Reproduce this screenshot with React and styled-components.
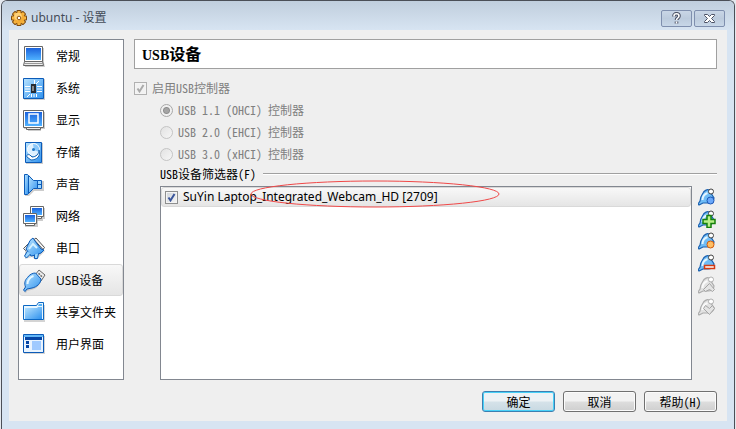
import React from 'react';
import styled, { createGlobalStyle, css } from 'styled-components';

const ui = '"Noto Sans", "Noto Sans CJK SC", sans-serif';
const song = '"Noto Sans CJK SC", sans-serif';

const GlobalStyle = createGlobalStyle`
  * { box-sizing: border-box; }
  body { margin: 0; background: #e4e8ee; font: 12px/16px ${ui}; color: #000; }
  button, input { font: inherit; margin: 0; }
`;

const Window = styled.main`
  display: flex;
  flex-direction: column;
  min-height: 100vh;
  margin: 0 1px;
  padding: 0 7px 8px;
  border: 1px solid #4b4f57;
  border-bottom: 0;
  border-radius: 6px 6px 0 0;
  background: #d7e4f2;
`;

const TitleBar = styled.header`
  display: flex;
  align-items: center;
  gap: 3px;
  height: 29px;
  margin: 0 -7px;
  padding: 5px 9px 0 8px;
  border-radius: 5px 5px 0 0;
  background: linear-gradient(#c0cedd, #d7e4f2);
  color: #444c58;
`;

const Caption = styled.h1`
  flex: 1;
  margin: 0;
  font: 400 12px/18px ${ui};
`;

const CaptionButtons = styled.div`
  display: flex;
  gap: 2px;
`;

const CaptionButton = styled.button`
  display: grid;
  place-items: center;
  width: 31px;
  height: 17px;
  padding: 0;
  border: 1px solid #7f8fae;
  border-radius: 2px;
  background: linear-gradient(#c9d6e6, #bccbdd 50%, #c8d7e8);
`;

const Client = styled.div`
  flex: 1;
  display: flex;
  flex-direction: column;
  gap: 11px;
  padding: 9px 10px 9px 9px;
  background: #efefef;
`;

const Columns = styled.div`
  flex: 1;
  display: flex;
  gap: 10px;
`;

const Sidebar = styled.nav`
  width: 106px;
  border: 1px solid #828790;
  background: #fff;
`;

const NavItem = styled.button`
  display: flex;
  align-items: center;
  gap: 10px;
  width: 100%;
  height: 32px;
  padding: 2px 2px 0;
  border: 1px solid transparent;
  border-radius: 3px;
  background: none;
  text-align: left;
  white-space: nowrap;
  ${p => p.$selected && css`
    border-color: #d9d9d9;
    background: linear-gradient(#f8f8f8, #e5e5e5);
  `}
`;

const Page = styled.section`
  flex: 1;
  display: flex;
  flex-direction: column;
  min-width: 0;
  font-family: ${song};
`;

const PageTitle = styled.h2`
  height: 30px;
  margin: 0 0 8px;
  padding: 3px 7px;
  border: 1px solid #a0a0a0;
  background: #fff;
  font: 700 16px/20px ${song};
`;

const TitleLatin = styled.span`
  font: 700 14px/20px "Liberation Serif", serif;
`;

const Half = styled.span`
  font-feature-settings: "hwid";
  white-space: pre;
`;

const Option = styled.label`
  display: flex;
  align-items: center;
  gap: 5px;
  height: 22px;
  color: #808080;
`;

const Controllers = styled.div`
  padding-left: 26px;
`;

const CheckBox = styled.input`
  appearance: none;
  flex: none;
  width: 13px;
  height: 13px;
  border: 1px solid #8e8f8f;
  box-shadow: inset 0 0 0 1px #f4f4f4;
  background: url("data:image/svg+xml,%3Csvg xmlns='http://www.w3.org/2000/svg' viewBox='0 0 11 11'%3E%3Cpath d='M2.5 5.5l2 3L8.5 2' fill='none' stroke='%233a559b' stroke-width='2'/%3E%3C/svg%3E") center / 11px 11px, linear-gradient(135deg, #cfd4da, #f6f6f6);
  &:disabled {
    border-color: #b1b1b1;
    background: url("data:image/svg+xml,%3Csvg xmlns='http://www.w3.org/2000/svg' viewBox='0 0 11 11'%3E%3Cpath d='M2.5 5.5l2 3L8.5 2' fill='none' stroke='%23aaaaaa' stroke-width='2'/%3E%3C/svg%3E") center / 11px 11px, #f2f2f2;
  }
`;

const Radio = styled.input`
  appearance: none;
  flex: none;
  width: 13px;
  height: 13px;
  border: 1px solid #c4c4c4;
  border-radius: 50%;
  background: linear-gradient(135deg, #e2e2e2, #f6f6f6);
  &:checked {
    border-color: #a8a8a8;
    background: radial-gradient(circle, #a4a4a4 0 2px, #8e8e8e 3px, #f0f0f0 4px);
  }
`;

const GroupTitle = styled.h3`
  display: flex;
  align-items: center;
  gap: 7px;
  height: 16px;
  margin: 1px 0 4px 26px;
  font: 400 12px/16px ${song};
  &::after { content: ""; flex: 1; border-top: 1px solid #a0a0a0; border-bottom: 1px solid #fff; }
`;

const Filters = styled.div`
  position: relative;
  flex: 1;
  display: flex;
  gap: 6px;
  margin-left: 26px;
`;

const FilterList = styled.div`
  flex: 1;
  border: 1px solid #828790;
  background: #fff;
  font-family: ${ui};
`;

const FilterRow = styled.label`
  display: flex;
  align-items: center;
  gap: 5px;
  height: 20px;
  padding: 0 3px;
  border: 1px solid #d9d9d9;
  border-radius: 3px;
  background: linear-gradient(#f8f8f8, #e5e5e5);
  white-space: nowrap;
`;

const Marker = styled.svg`
  position: absolute;
  left: 90px;
  top: -6px;
  pointer-events: none;
`;

const Tools = styled.div`
  display: flex;
  flex-direction: column;
  width: 19px;
`;

const ToolButton = styled.button`
  display: grid;
  justify-content: start;
  align-content: center;
  height: 22px;
  padding: 0;
  border: 0;
  background: none;
`;

const Actions = styled.footer`
  display: flex;
  justify-content: flex-end;
  gap: 8px;
`;

const ActionButton = styled.button`
  width: 73px;
  height: 21px;
  padding: 0;
  border: 1px solid ${p => (p.$primary ? '#3c7fb1' : '#707070')};
  border-radius: 3px;
  box-shadow: inset 0 0 0 1px ${p => (p.$primary ? '#48d1f8' : '#fbfbfb')};
  background: ${p => (p.$primary
    ? 'linear-gradient(#edf2f5 0 48%, #d5e2e9 52%, #c8d9e2)'
    : 'linear-gradient(#f2f2f2 0 48%, #dddddd 52%, #cfcfcf)')};
  font: 12px/17px ${song};
`;

function Icon({ children, name }) {
  return (
    <svg width="24" height="24" viewBox="0 0 24 24" aria-hidden="true">
      <defs>
        <linearGradient id={`${name}-b`} x1="0" y1="0" x2="0" y2="1">
          <stop offset="0" stopColor="#1b62dc" /><stop offset="1" stopColor="#50b2ff" />
        </linearGradient>
        <linearGradient id={`${name}-l`} x1="0" y1="0" x2="1" y2="1">
          <stop offset="0" stopColor="#b9e4ff" /><stop offset="1" stopColor="#2e91ee" />
        </linearGradient>
      </defs>
      {children}
    </svg>
  );
}

const icons = {
  general: n => (<>
    <path d="M4 3h18v15l1 4H3z" fill="#aaa" opacity=".6" />
    <path d="M2.5 1.5h18v15h-18z" fill="#fff" stroke="#666" />
    <path d="M4 3h15v12H4z" fill={`url(#${n}-b)`} />
    <path d="M2.5 16.5h18l1 4h-20z" fill="#eee" stroke="#666" />
    <path d="M2 18.5h19" stroke="#999" />
  </>),
  system: n => (<>
    <path d="M2 2h21v21H2z" fill="#aaa" opacity=".6" />
    <path d="M1.5 1.5h20v20h-20z" fill={`url(#${n}-l)`} stroke="#0c5bb8" />
    <path d="M3 9.5h5M3 12h5M3 14.5h5M15 9.5h5M15 12h5M15 14.5h5M9.5 17v3M12 17v3M14.5 17v3M12.5 3v4M14 7l3-3M5 20l3-3" stroke="#fff" fill="none" />
    <path d="M9 7h5v9H9z" fill="#282c32" /><path d="M10 9h2v5h-2z" fill="#888" />
  </>),
  display: n => (<>
    <path d="M2 3h21v17h-4v2H6v-2H2z" fill="#aaa" opacity=".6" />
    <path d="M1.5 1.5h20v17h-20z" fill="#fff" stroke="#666" />
    <path d="M3 3h17v14H3z" fill={`url(#${n}-b)`} />
    <path d="M7 5h9v9H7z" fill="none" stroke="#fff" strokeWidth="1.5" />
    <path d="M4.5 18.5h14v2h-14z" fill="#eee" stroke="#666" />
  </>),
  storage: n => (<>
    <path d="M4 2h17v21H4z" fill="#aaa" opacity=".6" />
    <path d="M3.5 1.5h16v20h-16z" fill={`url(#${n}-l)`} stroke="#0c5bb8" />
    <circle cx="11.5" cy="8.5" r="6" fill="#dff1ff" stroke="#fff" />
    <path d="M11 3a6 6 0 0 1 6 8l-5-2z" fill="#8ac8fb" />
    <circle cx="11.5" cy="8.5" r="1.5" fill="#2178c6" />
    <path d="M17 9c2 6-2 10-8 10l-4-3c-1-2 1-3 3-2l2 2c4 0 7-3 7-7z" fill="#fff" stroke="#1665b5" />
  </>),
  audio: n => (<>
    <path d="M3 2h4l5 6h10v10H12l-5 5H3z" fill="#aaa" opacity=".6" />
    <path d="M15.5 7.5h4v8h-4z" fill="#9bd6ff" stroke="#0c5bb8" />
    <path d="M6.5 2.5l5 5h4v8h-4l-5 5z" fill={`url(#${n}-l)`} stroke="#0c5bb8" />
    <path d="M2.5 1.5h3l1 1v18l-1 1h-3z" fill={`url(#${n}-l)`} stroke="#0c5bb8" />
    <path d="M16 11.5h4" stroke="#0c5bb8" />
  </>),
  network: n => (<>
    <path d="M9 3h14v11h-2v2H9z" fill="#aaa" opacity=".6" />
    <path d="M8.5 1.5h13v10h-13zM11.5 11.5h8v2h-8z" fill="#fff" stroke="#666" />
    <path d="M10 3h10v7H10z" fill={`url(#${n}-b)`} />
    <path d="M3 10h13v12H3z" fill="#aaa" opacity=".6" />
    <path d="M1.5 8.5h13v10h-13zM3.5 18.5h9v2h-9z" fill="#fff" stroke="#666" />
    <path d="M3 10h10v7H3z" fill={`url(#${n}-b)`} />
  </>),
  serial: n => (<>
    <path d="M3 12l9-9 11 11-9 9-4-3-7 2z" fill="#aaa" opacity=".5" />
    <path d="M12 2.5l2-1.5 8.5 9.5-1.5 2zM1.5 11.5L9 4l2 1-7.5 8.5z" fill="#f2f2f2" stroke="#555" />
    <path d="M8 3.5l3-2.5 2 3 6 8 3 1-3 3-5 2-5 1-5-7z" fill={`url(#${n}-l)`} stroke="#0c5bb8" />
    <path d="M5.5 14L2.5 19l2 2 4-4M12.5 17.5v4h3l1-5" fill="#9bd6ff" stroke="#0c5bb8" />
    <path d="M7 12l4-5 4 4" fill="none" stroke="#d4f0ff" strokeWidth="2" />
  </>),
  usb: n => (<>
    <path d="M13 6l4-5 6 5-4 6z" fill="#ececec" stroke="#666" />
    <path d="M16.5 4.5l1.5 1M18.5 6.5l1.5 1" stroke="#555" strokeWidth="1.5" />
    <path d="M6 10c2-3 5-5 8-5l5 6c0 5-5 9-10 10l-4 1-1 2-2-1 1-3C3 16 3 13 6 10z" fill="#aaa" opacity=".5" />
    <path d="M5.5 8.5c2-3 5-4.5 8-4.5l5.5 6c0 4-4 8-9 9l-5 1-2 2.5-1.5-1.5 2-3C2 14 3 11 5.5 8.5z" fill={`url(#${n}-l)`} stroke="#0c5bb8" />
    <path d="M5.5 15c0-4 3-7 6-8" fill="none" stroke="#e6f7ff" strokeWidth="2" />
  </>),
  folders: n => (<>
    <path d="M2 4h21v17H2z" fill="#aaa" opacity=".5" />
    <path d="M1.5 4.5h13l2-3h5v17h-20z" fill="#e7f6ff" stroke="#0c68c4" />
    <path d="M17 3h3v2h-4z" fill="#55b1f5" />
    <path d="M3 7h12l1-1h4v12H3z" fill={`url(#${n}-l)`} />
  </>),
  interface: n => (<>
    <path d="M2 3h21v18H2z" fill="#aaa" opacity=".5" />
    <path d="M1.5 1.5h20v18h-20z" fill="#e9f4ff" stroke="#0c5bb8" />
    <path d="M2 2h19v2H2z" fill="#62b7f7" />
    <path d="M3 4h17v3H3z" fill="#0545a5" />
    <path d="M4 8h3v3H4zM4 12h3v3H4z" fill="#0545a5" />
    <path d="M10 8h9v9h-9z" fill="#9fcaff" />
  </>),
};

const pages = [
  ['general', '常规'], ['system', '系统'], ['display', '显示'], ['storage', '存储'],
  ['audio', '声音'], ['network', '网络'], ['serial', '串口'], ['usb', 'USB设备'],
  ['folders', '共享文件夹'], ['interface', '用户界面'],
];

const badges = {
  none: <circle cx="12.5" cy="12.5" r="3.5" fill="#6aa8fa" stroke="#1d57b5" />,
  add: <path d="M9 5.500h4v4h4v4h-4v4H9v-4H5v-4h4z" fill="#b9f088" stroke="#16800c" strokeWidth="1.500" />,
  edit: <circle cx="12.5" cy="12.5" r="3.5" fill="#ffbe62" stroke="#cf5a10" />,
  remove: <path d="M6.5 11.5h10v3h-10z" fill="#fff" stroke="#d43a12" strokeWidth="1.5" />,
  up: <path d="M5.5 13.5l6-6 5 6-2 2-3-2-4 2z" fill="#e4e4e4" stroke="#a4a4a4" />,
  down: <path d="M5.5 10.5l2-3 4 3 3-3 2 3-5 6z" fill="#e4e4e4" stroke="#a4a4a4" />,
};

function ToolIcon({ kind }) {
  const off = kind === 'up' || kind === 'down';
  return (
    <svg width="18" height="18" viewBox="0 0 18 18" aria-hidden="true">
      <path d="M5 5c1-2 4-4 6-3l5 8c0 3-3 5-6 5H5l-4 2-1-1 2-3c0-3 1-5 3-8z" fill={off ? '#e2e2e2' : '#6fbcf6'} stroke={off ? '#acacac' : '#1c61b0'} strokeWidth="1.200" />
      <path d="M4.5 12c0-3 2-6 5-7" fill="none" stroke={off ? '#fafafa' : '#e3f5ff'} strokeWidth="2" />
      <circle cx="13" cy="3.500" r="2.500" fill="#fff" stroke={off ? '#b0b0b0' : '#444'} />
      {badges[kind]}
    </svg>
  );
}

const teeth = [0, 45, 90, 135];

function Gear() {
  return (
    <svg width="18" height="18" viewBox="0 0 18 18" aria-hidden="true">
      {teeth.map(a => <rect key={a} x="6.5" y="1" width="5" height="16" rx="1" fill="#7c480c" transform={`rotate(${a} 9 9)`} />)}
      <circle cx="9" cy="9" r="6.300" fill="#8f5612" />
      {teeth.map(a => <rect key={a} x="7.5" y="2" width="3" height="14" fill="#f7b845" transform={`rotate(${a} 9 9)`} />)}
      <circle cx="9" cy="9" r="5.500" fill="#f4ad36" />
      <circle cx="8" cy="7.5" r="3.800" fill="#ffd27a" />
      <circle cx="9" cy="9" r="1.800" fill="#fff" stroke="#8f5612" />
    </svg>
  );
}

const tools = [
  ['none', '添加空筛选器'], ['add', '添加设备筛选器'], ['edit', '编辑筛选器'],
  ['remove', '删除筛选器'], ['up', '上移'], ['down', '下移'],
];

const controllers = ['USB 1.1 (OHCI) ', 'USB 2.0 (EHCI) ', 'USB 3.0 (xHCI) '];

export default function App() {
  return (
    <>
      <GlobalStyle />
      <Window>
        <TitleBar>
          <Gear />
          <Caption>ubuntu - 设置</Caption>
          <CaptionButtons>
            <CaptionButton aria-label="帮助">
              <svg width="11" height="13" viewBox="0 0 11 13">
                <path d="M3 4.5V4c0-3 5-3 5 0 0 2-2.5 2-2.5 4M5.5 9.5v2" fill="none" stroke="#4c5266" strokeWidth="3.600" />
                <path d="M3 4.5V4c0-3 5-3 5 0 0 2-2.5 2-2.5 4M5.5 9.5v2" fill="none" stroke="#fff" strokeWidth="1.600" />
              </svg>
            </CaptionButton>
            <CaptionButton aria-label="关闭">
              <svg width="13" height="11" viewBox="0 0 13 11">
                <path d="M1.5 1.5h3l2 2 2-2h3v1l-3 3 3 3v1h-3l-2-2-2 2h-3v-1l3-3-3-3z" fill="#fff" stroke="#4c5266" />
              </svg>
            </CaptionButton>
          </CaptionButtons>
        </TitleBar>
        <Client>
          <Columns>
            <Sidebar>
              {pages.map(([id, label]) => (
                <NavItem key={id} $selected={id === 'usb'} aria-current={id === 'usb' ? 'page' : undefined}>
                  <Icon name={id}>{icons[id](id)}</Icon>
                  {label}
                </NavItem>
              ))}
            </Sidebar>
            <Page>
              <PageTitle><TitleLatin>USB</TitleLatin>设备</PageTitle>
              <Option>
                <CheckBox type="checkbox" defaultChecked disabled />
                <Half>启用USB控制器</Half>
              </Option>
              <Controllers>
                {controllers.map((text, i) => (
                  <Option key={text}>
                    <Radio type="radio" name="controller" defaultChecked={i === 0} disabled />
                    <Half>{text}控制器</Half>
                  </Option>
                ))}
              </Controllers>
              <GroupTitle><Half>USB设备筛选器(F)</Half></GroupTitle>
              <Filters>
                <FilterList>
                  <FilterRow>
                    <CheckBox type="checkbox" defaultChecked />
                    SuYin Laptop_Integrated_Webcam_HD [2709]
                  </FilterRow>
                </FilterList>
                <Tools>
                  {tools.map(([kind, label]) => (
                    <ToolButton key={kind} aria-label={label} disabled={kind === 'up' || kind === 'down'}>
                      <ToolIcon kind={kind} />
                    </ToolButton>
                  ))}
                </Tools>
                <Marker width="250" height="28" viewBox="0 0 250 28" aria-hidden="true">
                  <ellipse cx="125" cy="14" rx="124" ry="13" fill="none" stroke="#f04848" />
                </Marker>
              </Filters>
            </Page>
          </Columns>
          <Actions>
            <ActionButton $primary>确定</ActionButton>
            <ActionButton>取消</ActionButton>
            <ActionButton><Half>帮助(H)</Half></ActionButton>
          </Actions>
        </Client>
      </Window>
    </>
  );
}
